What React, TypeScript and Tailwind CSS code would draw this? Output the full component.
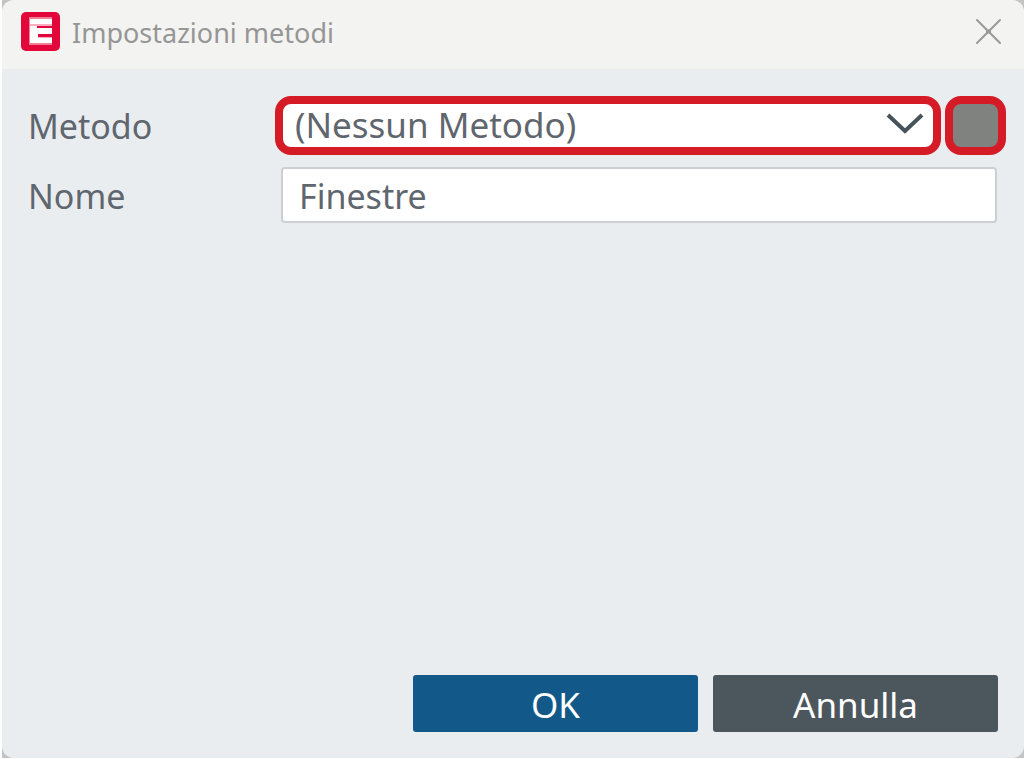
import { useState } from "react";

function AppLogo() {
  return (
    <svg viewBox="0 0 39 39" className="h-[39px] w-[39px] shrink-0" aria-hidden="true">
      <rect width="39" height="39" rx="5" fill="#e2063a" />
      <rect x="8" y="5" width="23" height="28" fill="#f27f98" />
      <path d="M9 7h22v5H9zM9 14h8v9H9zM9 16h22v6H9zM9 22h8v9H9zM9 26h22v5H9z" fill="#fff" />
      <path d="M16 14h15v2H16zM17 22h14v4H17z" fill="#e2063a" />
      <path d="M9 12h22v2H9zM17 25h14v1H17z" fill="#f8aebe" />
    </svg>
  );
}

function TitleBar() {
  return (
    <header className="flex h-[69px] items-center justify-between bg-[#f3f3f1] pr-[22px] pb-[7px] pl-[19px]">
      <div className="flex items-center gap-3">
        <AppLogo />
        <h1 className="pt-1 text-[27px] leading-9 text-[#969696]">Impostazioni metodi</h1>
      </div>
      <button type="button" aria-label="Chiudi" className="h-[27px] w-[27px]">
        <svg viewBox="0 0 27 27" fill="none" stroke="#999" strokeWidth="2" strokeLinecap="round">
          <path d="M2 2l23 23M25 2L2 25" />
          <path d="M11 13.500h5" strokeWidth="4" strokeLinecap="butt" />
        </svg>
      </button>
    </header>
  );
}

export default function App() {
  const [name, setName] = useState("Finestre");

  return (
    <div className="min-h-screen bg-white pb-px pl-[2px] font-['Noto_Sans',sans-serif]">
      <div className="bg-[#c4c4c4]">
        <main className="flex min-h-[calc(100vh-1px)] flex-col overflow-hidden rounded-xl bg-[#e9edf0]">
          <TitleBar />
          <form
            className="flex grow flex-col text-[35px] leading-[48px] text-[#5f666e]"
            onSubmit={(event) => event.preventDefault()}
          >
            <div className="grid grid-cols-[247px_1fr] items-center gap-y-3 pt-[27px] pl-[26px]">
              <label htmlFor="method" className="text-[34px] leading-[46px]">
                Metodo
              </label>
              <div className="flex gap-1 pr-[18px]">
                <div className="relative min-w-0 grow">
                  <select
                    id="method"
                    className="h-[59px] w-full appearance-none rounded-2xl border-8 border-[#d51c26] bg-white pr-16 pb-[2px] pl-3 leading-[41px]"
                  >
                    <option>(Nessun Metodo)</option>
                  </select>
                  <svg
                    viewBox="0 0 38 22"
                    className="pointer-events-none absolute top-[17px] right-[17px] h-[22px] w-[38px]"
                    fill="none"
                    stroke="#46535a"
                    strokeWidth="4"
                    aria-hidden="true"
                  >
                    <path d="M2 2l17 16L36 2" />
                  </svg>
                </div>
                <button
                  type="button"
                  aria-label="Colore"
                  className="h-[59px] w-[61px] shrink-0 rounded-2xl border-8 border-[#d51c26] bg-[#80827f]"
                />
              </div>

              <label htmlFor="name" className="pt-[2px] text-[34px] leading-[46px]">
                Nome
              </label>
              <div className="pr-[27px] pl-[6px]">
                <input
                  id="name"
                  value={name}
                  onChange={(event) => setName(event.target.value)}
                  className="block h-14 w-full rounded border-2 border-[#cccfd3] bg-white px-4 pt-[2px] text-[34px] leading-[46px]"
                />
              </div>
            </div>

            <div className="mt-auto flex justify-end gap-[15px] pr-[26px] pb-[26px] text-white">
              <button type="submit" className="h-[57px] w-[285px] rounded-[3px] bg-[#125888] pt-[2px]">
                OK
              </button>
              <button type="button" className="h-[57px] w-[285px] rounded-[3px] bg-[#4c575d] pt-[2px]">
                Annulla
              </button>
            </div>
          </form>
        </main>
      </div>
    </div>
  );
}
